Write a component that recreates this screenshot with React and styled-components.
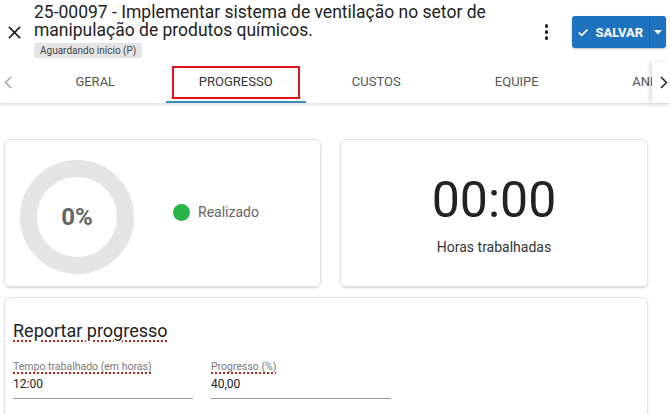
import React from 'react'
import styled, { createGlobalStyle } from 'styled-components'

const GlobalStyle = createGlobalStyle`
  html, body {
    margin: 0;
    padding: 0;
    background: #fff;
    font-family: Roboto, 'Liberation Sans', sans-serif;
    overflow: hidden;
  }
  * { box-sizing: border-box; }
`

const tabs = ['GERAL', 'PROGRESSO', 'CUSTOS', 'EQUIPE', 'ANEXOS']

const App = () => {
  return (
    <Page>
      <GlobalStyle />
      <Header>
        <CloseButton>
          <svg width='13' height='13' viewBox='0 0 14 14'>
            <path d='M1 1 L13 13 M13 1 L1 13' stroke='#222' strokeWidth='1.8' />
          </svg>
        </CloseButton>
        <TitleBlock>
          <Title>
            25-00097 - Implementar sistema de ventilação no setor de
            <br />
            manipulação de produtos químicos.
          </Title>
          <Chip>Aguardando início (P)</Chip>
        </TitleBlock>
        <Actions>
          <Kebab>
            <span />
            <span />
            <span />
          </Kebab>
          <SaveGroup>
            <SaveButton>
              <svg width='14' height='11' viewBox='0 0 14 11'>
                <path d='M1.2 5.6 L5 9.3 L12.8 1.5' stroke='#fff' strokeWidth='2.4' fill='none' />
              </svg>
              SALVAR
            </SaveButton>
            <SaveArrow>
              <svg width='8' height='5' viewBox='0 0 8 5'>
                <path d='M0 0 L8 0 L4 4.5 Z' fill='#fff' />
              </svg>
            </SaveArrow>
          </SaveGroup>
        </Actions>
      </Header>

      <TabBar>
        <ScrollArrow>
          <svg width='8' height='13' viewBox='0 0 8 13'>
            <path d='M7 1 L1.5 6.5 L7 12' stroke='#999' strokeWidth='1.3' fill='none' />
          </svg>
        </ScrollArrow>
        <TabList>
          {tabs.map((t) => (
            <Tab key={t} $active={t === 'PROGRESSO'}>
              {t === 'PROGRESSO' && <Highlight />}
              {t}
            </Tab>
          ))}
        </TabList>
        <ScrollArrow $right>
          <svg width='8' height='13' viewBox='0 0 8 13'>
            <path d='M1 1 L6.5 6.5 L1 12' stroke='#222' strokeWidth='1.5' fill='none' />
          </svg>
        </ScrollArrow>
      </TabBar>

      <Content>
        <CardRow>
          <Card>
            <Donut>
              <DonutValue>0%</DonutValue>
            </Donut>
            <Legend>
              <Dot />
              Realizado
            </Legend>
          </Card>
          <Card $column>
            <Clock>00:00</Clock>
            <ClockLabel>Horas trabalhadas</ClockLabel>
          </Card>
        </CardRow>
        <FormCard>
          <FormTitle>Reportar progresso</FormTitle>
          <Fields>
            <Field>
              <FieldLabel>Tempo trabalhado (em horas)</FieldLabel>
              <FieldValue>12:00</FieldValue>
            </Field>
            <Field>
              <FieldLabel>Progresso (%)</FieldLabel>
              <FieldValue>40,00</FieldValue>
            </Field>
          </Fields>
        </FormCard>
      </Content>
    </Page>
  )
}

const Page = styled.div`
  width: 670px;
  height: 414px;
  overflow: hidden;
  background: #fff;
`

const Header = styled.header`
  display: flex;
  align-items: flex-start;
  height: 62px;
  padding-top: 4px;
`

const CloseButton = styled.div`
  display: flex;
  justify-content: center;
  padding-top: 22px;
  margin-left: -6px;
  width: 40px;
`

const TitleBlock = styled.div`
  flex: 1;
  display: flex;
  flex-direction: column;
  align-items: flex-start;
`

const Title = styled.h1`
  margin: 0;
  font-size: 17.5px;
  line-height: 17.5px;
  font-weight: 400;
  color: #222;
`

const Chip = styled.span`
  margin-top: 4px;
  background: #e4e4e4;
  color: #444;
  font-size: 10px;
  line-height: 15px;
  padding: 0 6px;
  border-radius: 3px;
`

const Actions = styled.div`
  display: flex;
  align-items: center;
  gap: 24px;
  padding-top: 12px;
  padding-right: 4px;
`

const Kebab = styled.div`
  display: flex;
  flex-direction: column;
  gap: 2.5px;
  span {
    width: 3.5px;
    height: 3.5px;
    border-radius: 50%;
    background: #222;
  }
`

const SaveGroup = styled.div`
  display: flex;
  height: 32px;
  border-radius: 3px;
  overflow: hidden;
  background: #1f72be;
  box-shadow: 0 1px 2px rgba(0, 0, 0, 0.25);
`

const SaveButton = styled.div`
  display: flex;
  align-items: center;
  gap: 7px;
  padding: 0 6px 0 6px;
  color: #fff;
  font-weight: 700;
  font-size: 13px;
  width: 77px;
`

const SaveArrow = styled.div`
  width: 17px;
  display: flex;
  align-items: center;
  justify-content: center;
  border-left: 1px solid #1a5f9e;
`

const TabBar = styled.nav`
  display: flex;
  height: 41px;
  position: relative;
  box-shadow: 0 2px 3px rgba(0, 0, 0, 0.12);
  background: #fff;
`

const ScrollArrow = styled.div`
  width: ${(p) => (p.$right ? '18px' : '25px')};
  flex-shrink: 0;
  display: flex;
  align-items: center;
  justify-content: ${(p) => (p.$right ? 'center' : 'flex-start')};
  padding-left: ${(p) => (p.$right ? '6px' : '4px')};
  background: #fff;
  box-shadow: ${(p) => (p.$right ? '-3px 0 4px rgba(0,0,0,0.12)' : 'none')};
  z-index: 1;
`

const TabList = styled.div`
  flex: 1;
  display: flex;
  overflow: hidden;
`

const Tab = styled.div`
  position: relative;
  flex: 0 0 140.5px;
  display: flex;
  align-items: center;
  justify-content: center;
  font-size: 13px;
  color: ${(p) => (p.$active ? '#333' : '#555')};
  border-bottom: 2px solid ${(p) => (p.$active ? '#3d8fb3' : 'transparent')};
`

const Highlight = styled.span`
  position: absolute;
  left: 6px;
  right: 6px;
  top: 4px;
  bottom: 2px;
  border: 2px solid #e3131b;
`

const Content = styled.main`
  padding: 36px 22px 0 4px;
  display: flex;
  flex-direction: column;
  gap: 10px;
`

const CardRow = styled.div`
  display: grid;
  grid-template-columns: 317px 308px;
  gap: 19px;
`

const Card = styled.section`
  height: 148px;
  border: 1px solid #e2e2e2;
  border-radius: 6px;
  box-shadow: 0 1px 2px rgba(0, 0, 0, 0.18);
  display: flex;
  flex-direction: ${(p) => (p.$column ? 'column' : 'row')};
  align-items: center;
  justify-content: ${(p) => (p.$column ? 'center' : 'flex-start')};
  padding-left: ${(p) => (p.$column ? '0' : '15px')};
`

const Donut = styled.div`
  width: 114px;
  height: 114px;
  border-radius: 50%;
  border: 17px solid #e4e4e4;
  display: flex;
  align-items: center;
  justify-content: center;
  margin-top: 7px;
`

const DonutValue = styled.span`
  font-size: 24px;
  font-weight: 700;
  color: #666;
  margin-top: 0px;
`

const Legend = styled.div`
  display: flex;
  align-items: center;
  gap: 8px;
  margin-left: 39px;
  font-size: 14px;
  color: #666;
  margin-top: -2px;
`

const Dot = styled.span`
  width: 17px;
  height: 17px;
  border-radius: 50%;
  background: #27b547;
`

const Clock = styled.div`
  font-size: 50px;
  line-height: 50px;
  color: #222;
  margin-top: 4px;
`

const ClockLabel = styled.div`
  margin-top: 14px;
  font-size: 14px;
  color: #333;
`

const FormCard = styled.section`
  border: 1px solid #e2e2e2;
  border-radius: 6px;
  box-shadow: 0 1px 2px rgba(0, 0, 0, 0.18);
  padding: 22px 8px 20px 8px;
  height: 130px;
`

const FormTitle = styled.h2`
  margin: 0;
  font-size: 18px;
  font-weight: 400;
  color: #222;
  text-decoration: underline dotted #b02a1a;
  text-decoration-thickness: 2px;
  text-underline-offset: 3px;
`

const Fields = styled.div`
  display: flex;
  gap: 18px;
  margin-top: 19px;
`

const Field = styled.div`
  width: 180px;
  border-bottom: 1px solid #999;
  padding-bottom: 7px;
`

const FieldLabel = styled.div`
  font-size: 10.5px;
  color: #777;
  text-decoration: underline dotted #b02a1a;
  text-decoration-thickness: 1.5px;
  text-underline-offset: 2px;
`

const FieldValue = styled.div`
  margin-top: 4px;
  font-size: 12px;
  color: #222;
`

export default App
